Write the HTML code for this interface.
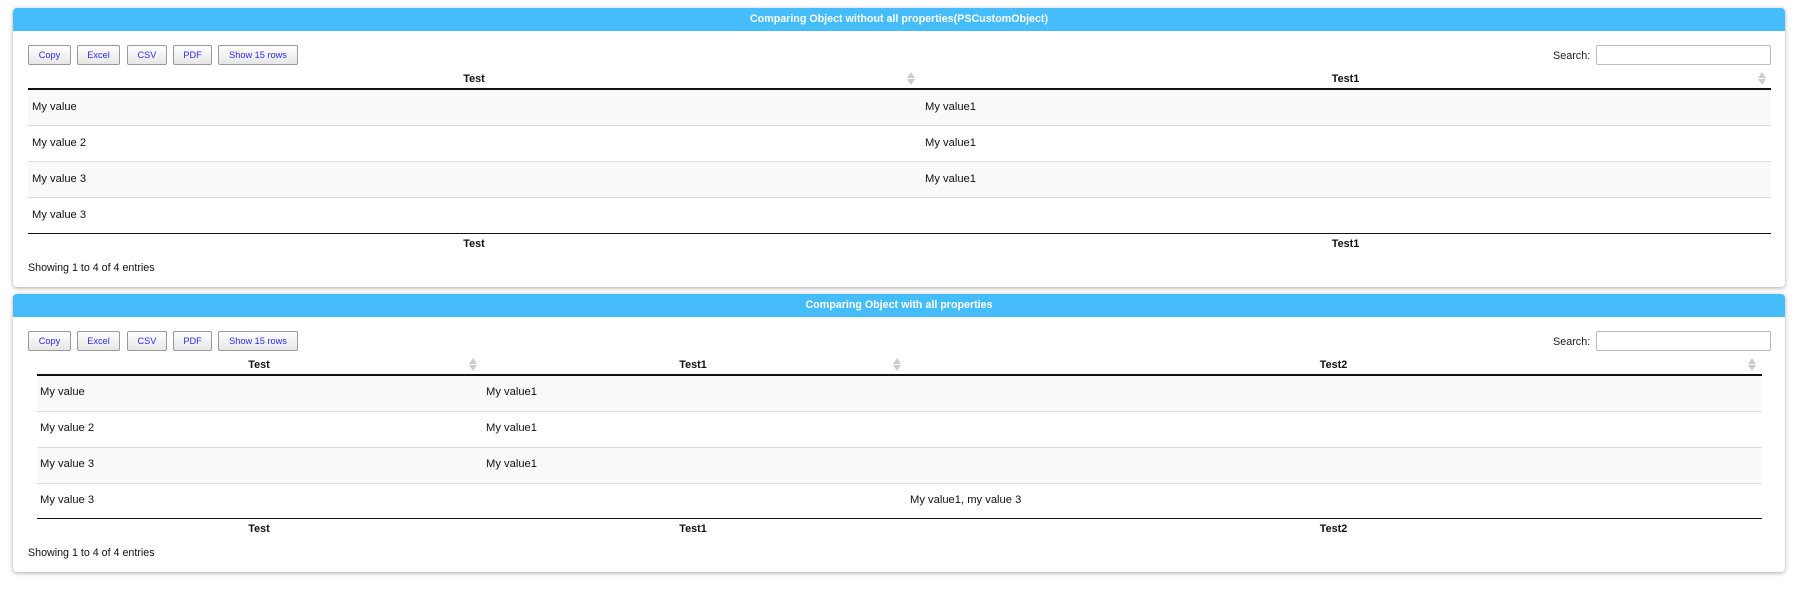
<!DOCTYPE html>
<html><head><meta charset="utf-8"><style>
*{box-sizing:border-box;margin:0;padding:0}
body{width:1797px;height:595px;background:#fff;font-family:"Liberation Sans",Arial,sans-serif;font-size:12.2px;color:#111;position:relative;overflow:hidden}
.panel{position:absolute;left:13px;width:1772px;background:#fff;border-radius:4px;box-shadow:0 1px 4px rgba(0,0,0,.35)}
.hdr{position:absolute;left:0;top:0;width:100%;height:23px;background:#44bdfa;border-radius:4px 4px 0 0;color:#fff;font-weight:bold;font-size:10.7px;text-align:center;line-height:23px}
.abs{position:absolute}
.btn{position:absolute;height:20px;border:1px solid #999;border-radius:2px;background:linear-gradient(#fff,#e6e6e6);color:#2a2af0;font-size:9.2px;text-align:center;line-height:18px}
.srch{position:absolute;font-size:10.8px;color:#222}
.inp{position:absolute;width:175px;height:20px;border:1px solid #bbb;border-radius:2px}
.th{position:absolute;font-weight:bold;text-align:center;font-size:10.8px}
.line{position:absolute;height:1px;background:#111}
.row{position:absolute;height:36px;border-bottom:1px solid #ddd}
.odd{background:#f9f9f9}
.cell{position:absolute;line-height:36px;font-size:11.2px}
.arr{position:absolute;width:8px;height:14px}
.arr:before{content:"";position:absolute;left:0;top:0;border-left:4px solid transparent;border-right:4px solid transparent;border-bottom:6px solid #ccc}
.arr:after{content:"";position:absolute;left:0;top:7px;border-left:4px solid transparent;border-right:4px solid transparent;border-top:6px solid #ccc}
</style></head><body>

<div class="panel" style="top:8px;height:279px">
 <div class="hdr">Comparing Object without all properties(PSCustomObject)</div>
</div>
<div class="btn" style="left:28px;top:45px;width:43px">Copy</div>
<div class="btn" style="left:77px;top:45px;width:43px">Excel</div>
<div class="btn" style="left:127px;top:45px;width:40px">CSV</div>
<div class="btn" style="left:173px;top:45px;width:39px">PDF</div>
<div class="btn" style="left:218px;top:45px;width:80px">Show 15 rows</div>
<div class="srch" style="left:1553px;top:50px">Search:</div>
<div class="inp" style="left:1596px;top:45px"></div>
<div class="th" style="left:28px;width:892px;top:73px">Test</div>
<div class="th" style="left:920px;width:851px;top:73px">Test1</div>
<div class="arr" style="left:907px;top:72px"></div>
<div class="arr" style="left:1758px;top:72px"></div>
<div class="line" style="left:28px;width:1743px;top:88px;height:2px"></div>
<div class="row odd" style="left:28px;width:1743px;top:90px"></div>
<div class="row" style="left:28px;width:1743px;top:126px"></div>
<div class="row odd" style="left:28px;width:1743px;top:162px"></div>
<div class="row" style="left:28px;width:1743px;top:198px;border:none"></div>
<div class="cell" style="left:32px;top:89px">My value</div><div class="cell" style="left:925px;top:89px">My value1</div>
<div class="cell" style="left:32px;top:125px">My value 2</div><div class="cell" style="left:925px;top:125px">My value1</div>
<div class="cell" style="left:32px;top:161px">My value 3</div><div class="cell" style="left:925px;top:161px">My value1</div>
<div class="cell" style="left:32px;top:197px">My value 3</div>
<div class="line" style="left:28px;width:1743px;top:233px"></div>
<div class="th" style="left:28px;width:892px;top:238px">Test</div>
<div class="th" style="left:920px;width:851px;top:238px">Test1</div>
<div class="abs" style="left:28px;top:262px;font-size:10.7px">Showing 1 to 4 of 4 entries</div>

<div class="panel" style="top:294px;height:278px">
 <div class="hdr">Comparing Object with all properties</div>
</div>
<div class="btn" style="left:28px;top:331px;width:43px">Copy</div>
<div class="btn" style="left:77px;top:331px;width:43px">Excel</div>
<div class="btn" style="left:127px;top:331px;width:40px">CSV</div>
<div class="btn" style="left:173px;top:331px;width:39px">PDF</div>
<div class="btn" style="left:218px;top:331px;width:80px">Show 15 rows</div>
<div class="srch" style="left:1553px;top:336px">Search:</div>
<div class="inp" style="left:1596px;top:331px"></div>
<div class="th" style="left:37px;width:444px;top:359px">Test</div>
<div class="th" style="left:481px;width:424px;top:359px">Test1</div>
<div class="th" style="left:905px;width:857px;top:359px">Test2</div>
<div class="arr" style="left:469px;top:358px"></div>
<div class="arr" style="left:893px;top:358px"></div>
<div class="arr" style="left:1748px;top:358px"></div>
<div class="line" style="left:37px;width:1725px;top:374px;height:2px"></div>
<div class="row odd" style="left:37px;width:1725px;top:376px"></div>
<div class="row" style="left:37px;width:1725px;top:412px"></div>
<div class="row odd" style="left:37px;width:1725px;top:448px"></div>
<div class="row" style="left:37px;width:1725px;top:484px;border:none"></div>
<div class="cell" style="left:40px;top:374px">My value</div><div class="cell" style="left:486px;top:374px">My value1</div>
<div class="cell" style="left:40px;top:410px">My value 2</div><div class="cell" style="left:486px;top:410px">My value1</div>
<div class="cell" style="left:40px;top:446px">My value 3</div><div class="cell" style="left:486px;top:446px">My value1</div>
<div class="cell" style="left:40px;top:482px">My value 3</div><div class="cell" style="left:910px;top:482px">My value1, my value 3</div>
<div class="line" style="left:37px;width:1725px;top:518px"></div>
<div class="th" style="left:37px;width:444px;top:523px">Test</div>
<div class="th" style="left:481px;width:424px;top:523px">Test1</div>
<div class="th" style="left:905px;width:857px;top:523px">Test2</div>
<div class="abs" style="left:28px;top:547px;font-size:10.7px">Showing 1 to 4 of 4 entries</div>
</body></html>
